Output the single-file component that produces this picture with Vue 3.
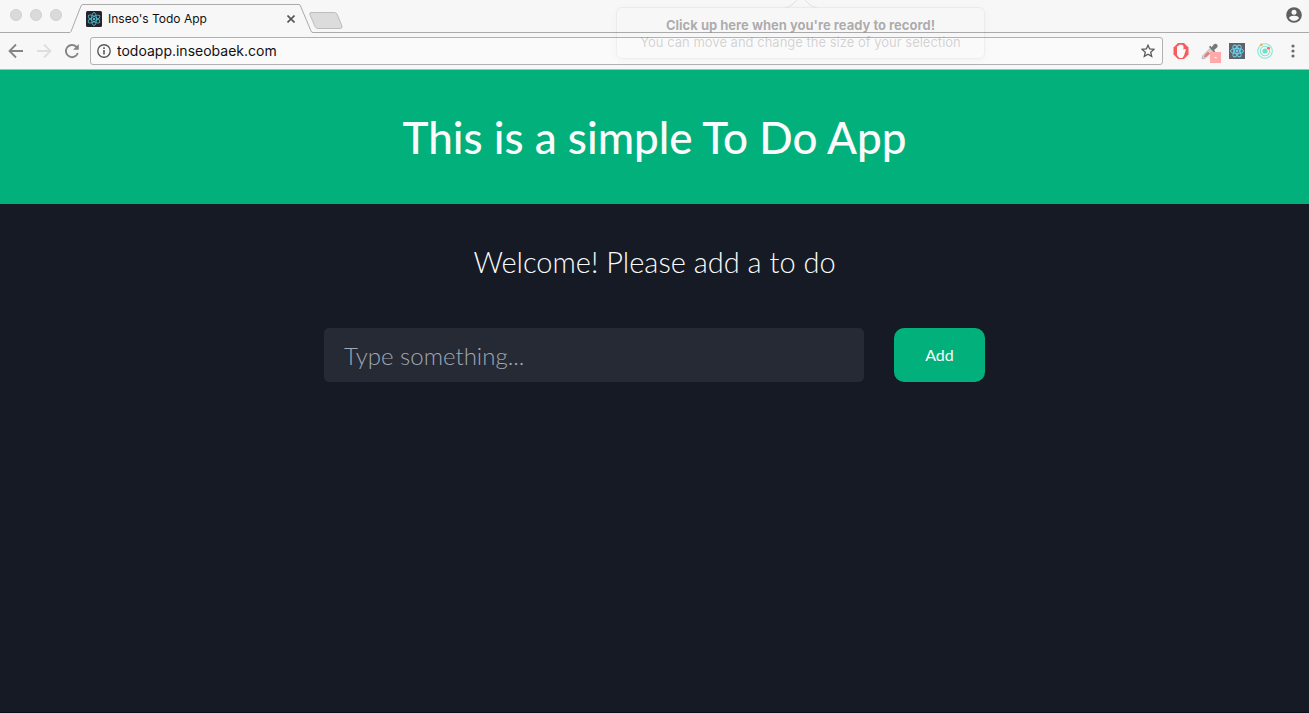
<script setup>
import { ref } from 'vue'

const address = ref('todoapp.inseobaek.com')
const draft = ref('')
const todos = ref([])
const orbits = [0, 60, 120]

function addTodo() {
  const text = draft.value.trim()
  if (text) todos.value.push(text)
  draft.value = ''
}
</script>

<template>
  <div class="window">
    <header class="chrome">
      <div class="strip">
        <div class="lights">
          <span class="light"></span><span class="light"></span><span class="light"></span>
        </div>
        <svg class="slant" width="13" height="33" viewBox="0 0 13 33" aria-hidden="true">
          <path d="M0 32.5 L1 31.5 L11 6 Q11.600 4.500 13 4.500" />
        </svg>
        <div class="tab">
          <svg width="16" height="16" viewBox="0 0 16 16" aria-hidden="true">
            <rect width="16" height="16" rx="1.500" fill="#222428" />
            <g fill="none" stroke="#4fb5d0" stroke-width=".9">
              <ellipse v-for="a in orbits" :key="a" cx="8" cy="8" rx="6.500" ry="2.500" :transform="`rotate(${a + 30} 8 8)`" />
            </g>
            <circle cx="8" cy="8" r="1.300" fill="#4fb5d0" />
          </svg>
          <span class="tab-title">Inseo's Todo App</span>
          <button class="plain" type="button" aria-label="Close tab">
            <svg width="8" height="8" viewBox="0 0 8 8"><path d="M.5 .5 L7.500 7.500 M7.500 .5 L.5 7.500" stroke="#555" stroke-width="1.600" /></svg>
          </button>
        </div>
        <svg class="slant" width="14" height="33" viewBox="0 0 14 33" aria-hidden="true">
          <path d="M0 4.500 Q1 4.500 1.500 6 L12 31 Q12.500 32.500 14 32.500" />
        </svg>
        <div class="rest">
          <button class="plain new-tab" type="button" aria-label="New tab">
            <svg width="34" height="17" viewBox="0 0 34 17"><path d="M2 .5 H25 Q27 .5 28 2 L33 14 Q33.500 16.500 31 16.500 H9 Q7 16.500 6 14.500 L.8 2.500 Q.3 .5 2 .5Z" fill="#dcdcdc" stroke="#bdbdbf" /></svg>
          </button>
          <button class="plain" type="button" aria-label="Profile">
            <svg width="16" height="16" viewBox="0 0 16 16">
              <circle cx="8" cy="8" r="7.800" fill="#5f5f61" />
              <circle cx="8" cy="5.200" r="2.500" fill="#f7f7f7" />
              <path d="M3 11.300 C3 9.600 6 8.800 8 8.800 S13 9.600 13 11.300 Q11 13.900 8 13.900 T3 11.300Z" fill="#f7f7f7" />
            </svg>
          </button>
        </div>
      </div>

      <div class="toolbar">
        <nav class="nav">
          <button class="plain" type="button" aria-label="Back">
            <svg width="16" height="16" viewBox="0 0 16 16" fill="none" stroke="#858587" stroke-width="1.800"><path d="M15 8 H2 M8 1.500 L1.500 8 L8 14.500" /></svg>
          </button>
          <button class="plain" type="button" aria-label="Forward">
            <svg width="16" height="16" viewBox="0 0 16 16" fill="none" stroke="#dedee0" stroke-width="1.800"><path d="M1 8 H14 M8 1.500 L14.500 8 L8 14.500" /></svg>
          </button>
          <button class="plain" type="button" aria-label="Reload">
            <svg width="16" height="16" viewBox="0 0 16 16" fill="none" stroke="#858587" stroke-width="1.900"><path d="M13.800 10 A6.100 6.100 0 1 1 12.300 3.700 L13.500 5" /><path d="M14.800 1 V6.700 H9Z" fill="#858587" stroke="none" /></svg>
          </button>
        </nav>
        <div class="omnibox">
          <svg width="14" height="14" viewBox="0 0 14 14" aria-hidden="true">
            <circle cx="7" cy="7" r="6.200" fill="none" stroke="#5a5a5c" stroke-width="1.400" />
            <path d="M7 6 V10.500 M7 3.300 V4.900" stroke="#5a5a5c" stroke-width="1.600" />
          </svg>
          <input v-model="address" class="address" type="text" aria-label="Address" />
          <button class="plain" type="button" aria-label="Bookmark">
            <svg width="14" height="14" viewBox="0 0 14 14"><path d="M7 1.200 L8.700 5 L12.900 5.400 L9.700 8.200 L10.700 12.400 L7 10.200 L3.300 12.400 L4.300 8.200 L1.100 5.400 L5.300 5Z" fill="none" stroke="#5a5a5c" stroke-width="1.300" /></svg>
          </button>
        </div>
        <div class="extensions">
          <button class="plain" type="button" aria-label="Content blocker">
            <svg width="16" height="16" viewBox="0 0 16 16">
              <path d="M5 0 H11 L15.500 4.500 V11.500 L11 16 H5 L.5 11.500 V4.500Z" fill="#f95c5c" />
              <path d="M4 4 Q4.500 2.500 5.500 3 Q6 1.300 7 2 Q8 .8 9 2 Q10.200 1.500 10.500 3.500 V7 L11.500 6 Q13 5.500 12.800 7 L11 12.500 L9.500 15 H6.300 L4 12Z" fill="#fafafa" />
            </svg>
          </button>
          <button class="plain" type="button" aria-label="Colour picker">
            <svg width="20" height="20" viewBox="0 0 20 20">
              <path d="M1 15.500 L2 12.500 L9 5.500 L11.500 8 L4.500 15 L1.500 16Z" fill="#d8d3d3" stroke="#aaa" stroke-width=".8" />
              <path d="M3 14 L4 11.700 L7 8.700 L9 10.500 L5 14Z" fill="#ee7777" />
              <path d="M8 4 L9.200 2.800 L10.800 4.200 L12.500 1.800 Q14.500 -.2 16 1.500 Q17.500 3 15.500 5 L13 7 L14.300 8.200 L13 9.500Z" fill="#777" />
              <rect x="9" y="9" width="11" height="11" fill="#ffa9aa" />
              <path d="M13 14 H15.500 V16Z" fill="#fff" />
            </svg>
          </button>
          <button class="plain" type="button" aria-label="React tools">
            <svg width="16" height="16" viewBox="0 0 16 16">
              <rect width="16" height="16" fill="#606365" />
              <g fill="none" stroke="#69d3f2" stroke-width="1"><ellipse v-for="a in orbits" :key="a" cx="8" cy="8" rx="6.500" ry="2.600" :transform="`rotate(${a} 8 8)`" /></g>
              <circle cx="8" cy="8" r="1.400" fill="#69d3f2" />
            </svg>
          </button>
          <button class="plain" type="button" aria-label="Orbit tools">
            <svg width="16" height="16" viewBox="0 0 16 16">
              <circle cx="8" cy="8" r="7.300" fill="none" stroke="#83e6d0" stroke-width="1.100" />
              <circle cx="8" cy="8" r="4.700" fill="none" stroke="#83e6d0" stroke-width="1.100" />
              <circle cx="8" cy="8" r="2.600" fill="#72e0c8" />
              <circle cx="4.300" cy="1.800" r="1.400" fill="#ffad55" />
              <circle cx="11.500" cy="5.200" r="1.400" fill="#f86a50" />
            </svg>
          </button>
          <button class="plain" type="button" aria-label="Menu">
            <svg width="16" height="16" viewBox="0 0 16 16" fill="#6c6c6e"><circle cx="8" cy="3" r="1.600" /><circle cx="8" cy="8" r="1.600" /><circle cx="8" cy="13" r="1.600" /></svg>
          </button>
        </div>
      </div>

      <div class="hint">
        <svg class="pointer" width="32" height="8" viewBox="0 0 32 8" aria-hidden="true"><path d="M0 7.500 Q5 7.500 8 4 L12 0 M20 0 L24 4 Q27 7.500 32 7.500" fill="none" stroke="#e2e0e2" /></svg>
        <strong>Click up here when you're ready to record!</strong>
        <span>You can move and change the size of your selection</span>
      </div>
    </header>

    <main class="page">
      <div class="banner"><h1>This is a simple To Do App</h1></div>
      <h2>Welcome! Please add a to do</h2>
      <form class="entry" @submit.prevent="addTodo">
        <input v-model="draft" class="field" type="text" aria-label="New to do" placeholder="Type something..." />
        <button class="add" type="submit">Add</button>
      </form>
      <ul v-if="todos.length" class="list">
        <li v-for="(todo, i) in todos" :key="i">{{ todo }}</li>
      </ul>
    </main>
  </div>
</template>

<style>
body {
  margin: 0;
  background: #151a24;
}
</style>

<style scoped>
.window {
  display: flex;
  flex-direction: column;
  min-height: 100vh;
  font-family: Inter, "Liberation Sans", sans-serif;
}
.chrome {
  position: relative;
  background: #f7f7f7;
  color: #111;
  border-bottom: 1px solid #b4b9b7;
}
.plain {
  display: flex;
  padding: 0;
  border: 0;
  background: none;
}
.strip {
  display: flex;
  height: 33px;
}
.lights {
  display: flex;
  gap: 8px;
  padding: 9px 8px 0 10px;
  border-bottom: 1px solid #aaa9ab;
}
.light {
  box-sizing: border-box;
  width: 12px;
  height: 12px;
  border: 1px solid #d2d0d2;
  border-radius: 50%;
  background: #dbdadb;
}
.slant {
  flex: none;
  fill: none;
  stroke: #aaa9ab;
}
.tab {
  box-sizing: border-box;
  display: flex;
  align-items: center;
  width: 216px;
  height: 29px;
  margin-top: 4px;
  padding: 0 4px 0 3px;
  border-top: 1px solid #aaa9ab;
  font-size: 12px;
}
.tab-title {
  flex: 1;
  margin-left: 6px;
  padding-bottom: 2px;
}
.rest {
  flex: 1;
  display: flex;
  align-items: center;
  justify-content: space-between;
  padding: 0 7px 2px 0;
  border-bottom: 1px solid #aaa9ab;
}
.new-tab {
  margin: 10px 0 0 -4px;
}
.toolbar {
  display: flex;
  align-items: center;
  height: 36px;
}
.nav {
  display: flex;
  gap: 12px;
  padding: 0 10px 0 8px;
}
.omnibox {
  box-sizing: border-box;
  flex: 1;
  display: flex;
  align-items: center;
  height: 28px;
  padding: 0 7px 0 6px;
  border: 1px solid #b1b0b2;
  border-radius: 3px;
  background: #fafafa;
}
.address {
  flex: 1;
  min-width: 0;
  margin-left: 6px;
  padding: 0;
  border: 0;
  outline: 0;
  background: none;
  color: #111;
  font: 14px/20px Inter, "Liberation Sans", sans-serif;
}
.extensions {
  display: flex;
  align-items: center;
  gap: 12px;
  padding: 0 8px 0 10px;
}
.extensions .plain:nth-child(2) {
  margin-right: -4px;
  padding-top: 4px;
}
.hint {
  box-sizing: border-box;
  position: absolute;
  top: 7px;
  left: 616px;
  display: flex;
  flex-direction: column;
  align-items: center;
  width: 369px;
  height: 52px;
  padding-top: 9px;
  border: 1px solid rgba(120, 100, 120, 0.08);
  border-radius: 6px;
  box-shadow: 0 2px 8px rgba(0, 0, 0, 0.03);
  color: rgba(90, 86, 90, 0.25);
  font-size: 13px;
  line-height: 17px;
  white-space: nowrap;
  pointer-events: none;
}
.hint strong {
  color: rgba(80, 76, 80, 0.45);
}
.pointer {
  position: absolute;
  top: -8px;
  left: 168px;
}
.page {
  flex: 1;
  display: flex;
  flex-direction: column;
  align-items: center;
  border-bottom: 1px solid #0c0d18;
  background: #151a24;
  color: #fafafa;
  font-family: Lato, "Open Sans", sans-serif;
}
.banner {
  align-self: stretch;
  padding: 40px 20px;
  background: #02b07c;
  text-align: center;
}
h1 {
  margin: 0;
  font-size: 44px;
  font-weight: 500;
  line-height: 54px;
}
h2 {
  margin: 38px 0 46px;
  font-size: 29px;
  font-weight: 300;
  line-height: 40px;
}
.entry {
  display: flex;
  gap: 30px;
  width: min(661px, 92%);
}
.field {
  box-sizing: border-box;
  flex: 1;
  min-width: 0;
  height: 54px;
  padding: 0 20px;
  border: 0;
  border-radius: 5px;
  background: #262a34;
  color: #fafafa;
  font: 300 24px Lato, "Open Sans", sans-serif;
}
.field::placeholder {
  color: #a0a6b4;
  opacity: 1;
}
.add {
  width: 91px;
  height: 54px;
  padding: 0 0 2px;
  border: 0;
  border-radius: 10px;
  background: #02b07c;
  color: #fafafa;
  font: 400 16px Lato, "Open Sans", sans-serif;
}
.list {
  width: min(661px, 92%);
  padding: 0;
  list-style: none;
  font-size: 20px;
  line-height: 32px;
}
</style>
